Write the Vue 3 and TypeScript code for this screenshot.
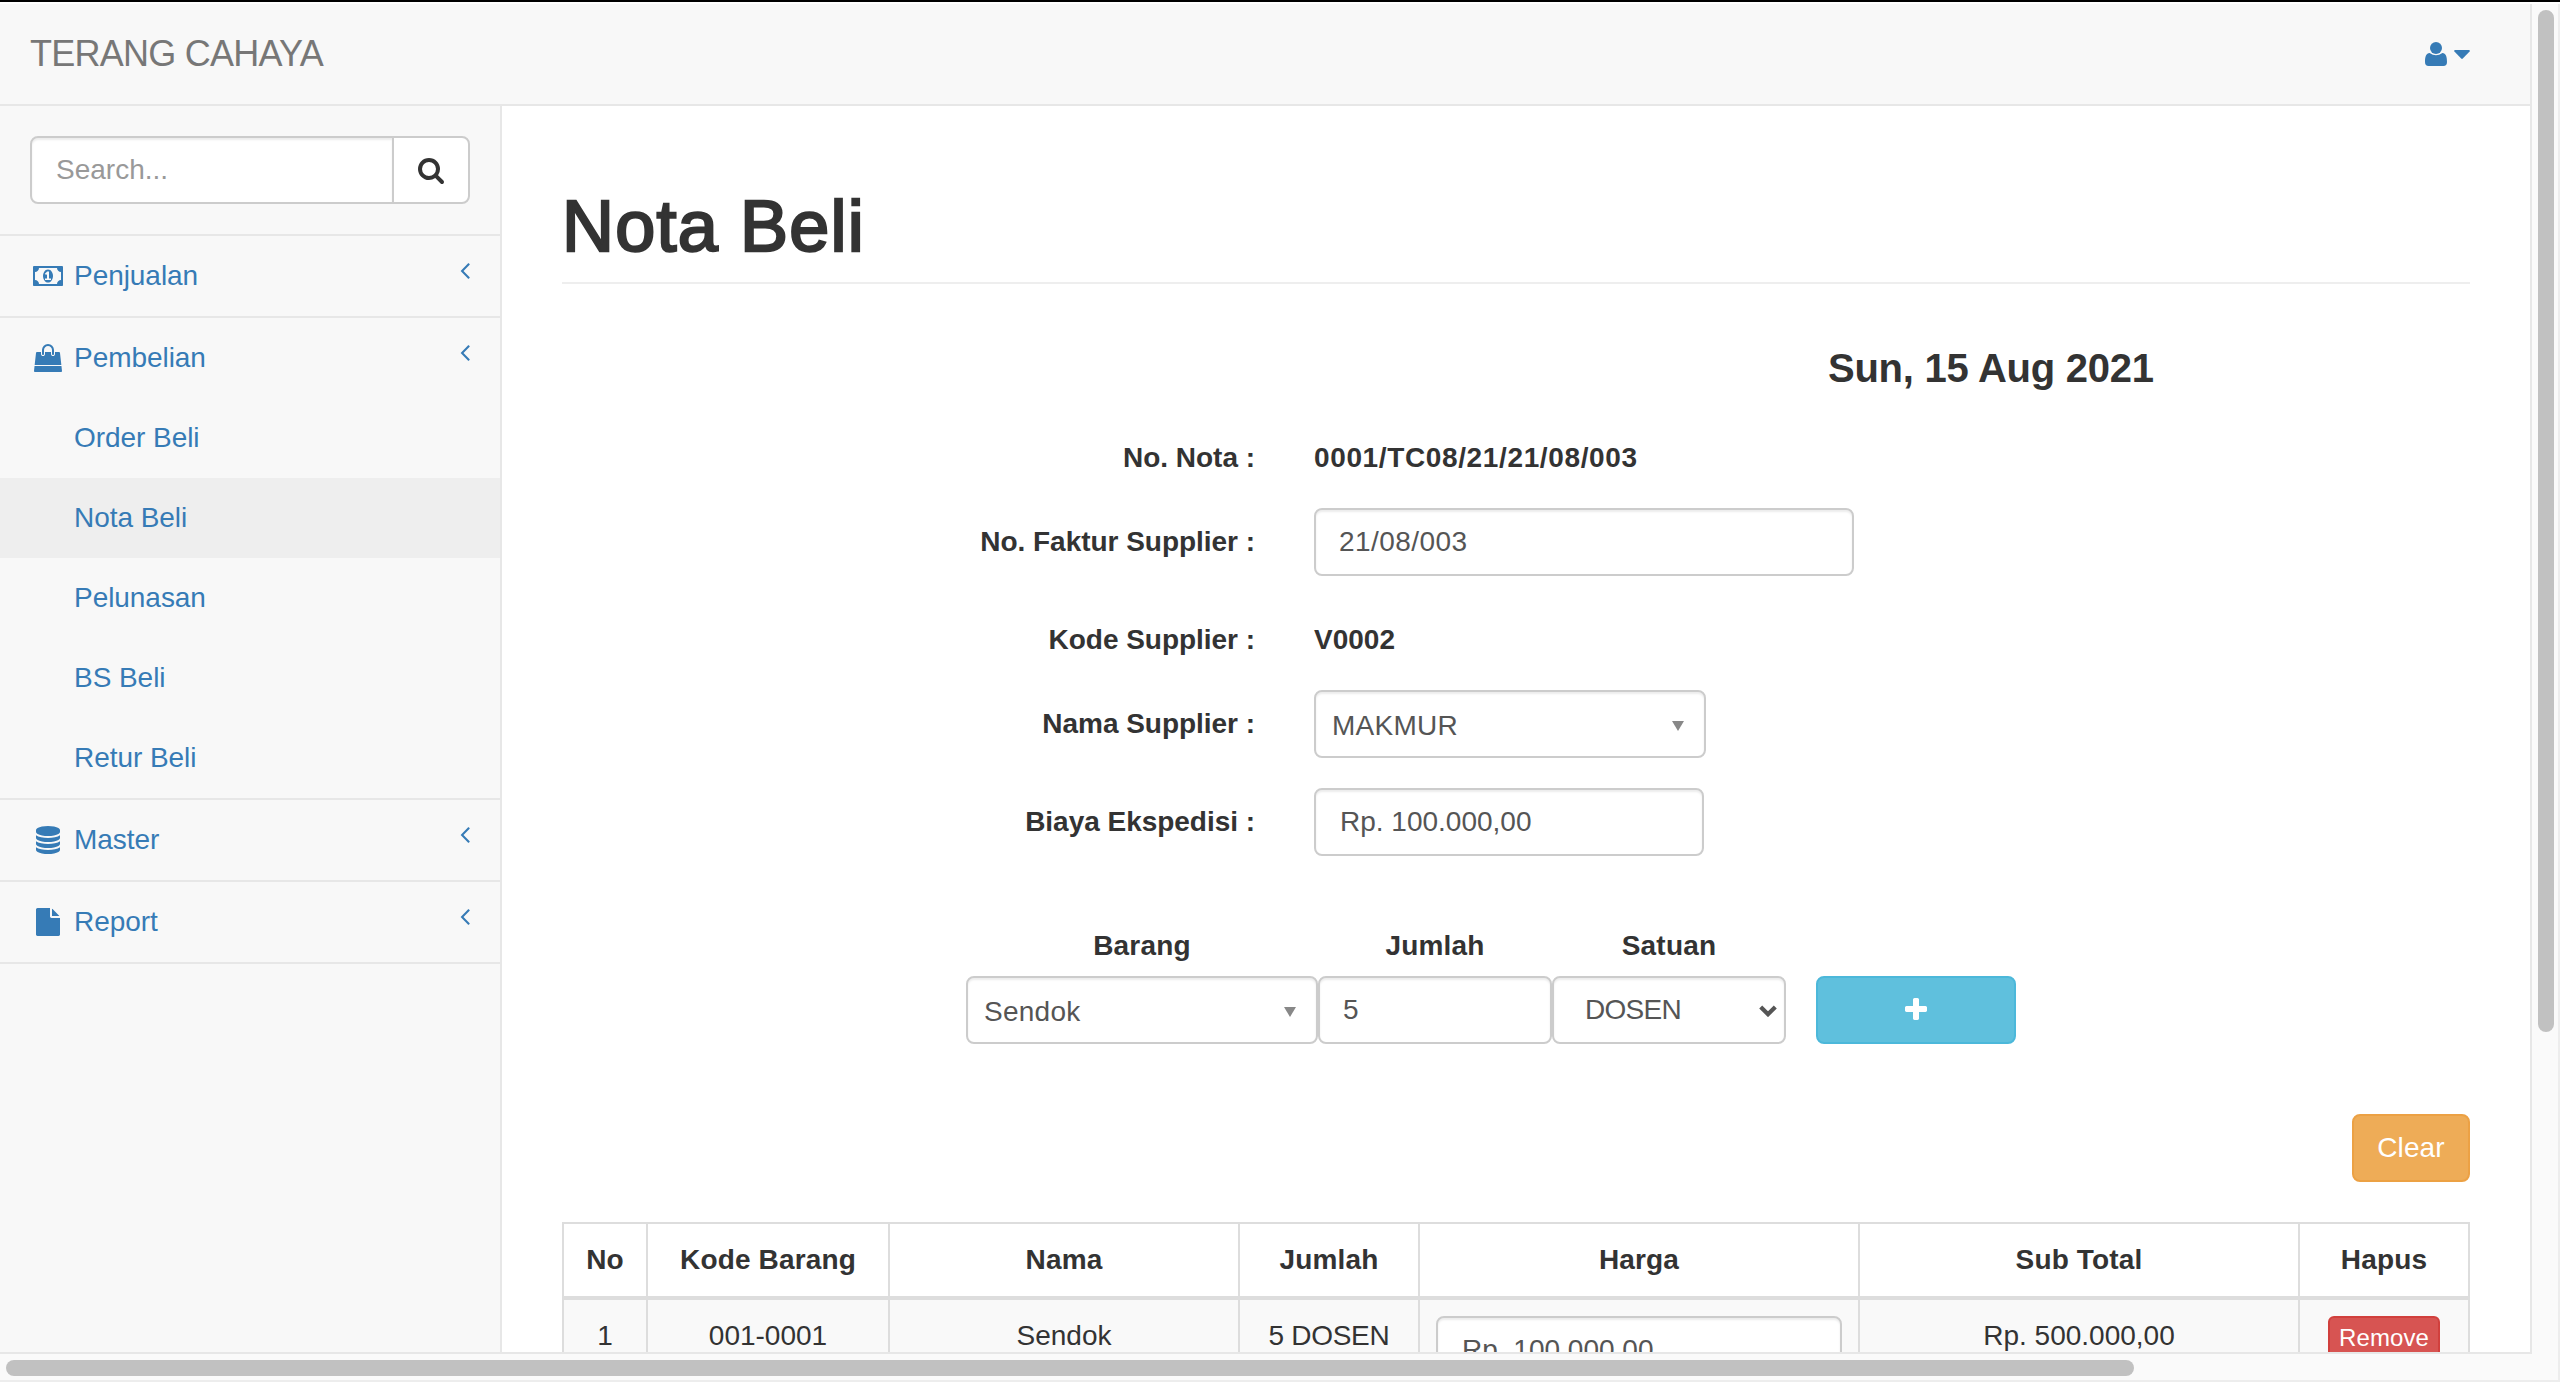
<script setup lang="ts">
import { ref } from 'vue'

interface MenuItem {
  label: string
  icon: string
  box: string
  wide?: boolean
  children?: string[]
}

const search = ref('')
const active = ref('Nota Beli')
const faktur = ref('21/08/003')
const biaya = ref('Rp. 100.000,00')
const jumlah = ref('5')
const harga = ref('Rp. 100.000,00')

const square = '0 0 1792 1792'
const angleLeft =
  'M1203 544q0 13-10 23l-393 393 393 393q10 10 10 23t-10 23l-50 50q-10 10-23 10t-23-10l-466-466q-10-10-10-23t10-23l466-466q10-10 23-10t23 10l50 50q10 10 10 23z'

const menu: MenuItem[] = [
  {
    label: 'Penjualan',
    box: '0 0 1920 1792',
    wide: true,
    icon: 'M768 1152h384v-96h-128v-448h-114l-148 137 77 80q42-37 55-57h2v288h-128v96zm512-256q0 70-21 142t-59.5 134-101.5 101-138 39-138-39-101.5-101-59.5-134-21-142 21-142 59.5-134 101.5-101 138-39 138 39 101.5 101 59.5 134 21 142zm512 256v-512q-106 0-181-75t-75-181h-1152q0 106-75 181t-181 75v512q106 0 181 75t75 181h1152q0-106 75-181t181-75zm128-832v1152q0 26-19 45t-45 19h-1792q-26 0-45-19t-19-45v-1152q0-26 19-45t45-19h1792q26 0 45 19t19 45z',
  },
  {
    label: 'Pembelian',
    box: square,
    icon: 'M1757 1408l35 313q3 28-16 50-19 21-48 21h-1664q-29 0-48-21-19-22-16-50l35-313h1722zm-93-839l86 775h-1708l86-775q3-24 21-40.5t43-16.5h256v128q0 53 37.5 90.5t90.5 37.5 90.5-37.5 37.5-90.5v-128h384v128q0 53 37.5 90.5t90.5 37.5 90.5-37.5 37.5-90.5v-128h256q25 0 43 16.5t21 40.5zm-384-185v256q0 26-19 45t-45 19-45-19-19-45v-256q0-106-75-181t-181-75-181 75-75 181v256q0 26-19 45t-45 19-45-19-19-45v-256q0-159 112.5-271.5t271.5-112.5 271.5 112.5 112.5 271.5z',
    children: ['Order Beli', 'Nota Beli', 'Pelunasan', 'BS Beli', 'Retur Beli'],
  },
  {
    label: 'Master',
    box: square,
    icon: 'M896 768q237 0 443-43t325-127v170q0 69-103 128t-280 93.5-385 34.5-385-34.5-280-93.5-103-128v-170q119 84 325 127t443 43zm0 768q237 0 443-43t325-127v170q0 69-103 128t-280 93.5-385 34.5-385-34.5-280-93.5-103-128v-170q119 84 325 127t443 43zm0-384q237 0 443-43t325-127v170q0 69-103 128t-280 93.5-385 34.5-385-34.5-280-93.5-103-128v-170q119 84 325 127t443 43zm0-1152q208 0 385 34.5t280 93.5 103 128v128q0 69-103 128t-280 93.5-385 34.5-385-34.5-280-93.5-103-128v-128q0-69 103-128t280-93.5 385-34.5z',
  },
  {
    label: 'Report',
    box: square,
    icon: 'M1152 512v-472q22 14 36 28l408 408q14 14 28 36h-472zm-128 32q0 40 28 68t68 28h544v1056q0 40-28 68t-68 28h-1344q-40 0-68-28t-28-68v-1600q0-40 28-68t68-28h800v544z',
  },
]

const columns = ['No', 'Kode Barang', 'Nama', 'Jumlah', 'Harga', 'Sub Total', 'Hapus']
</script>

<template>
  <div class="screen">
    <div class="viewport">
      <header class="navbar">
        <span class="brand">TERANG CAHAYA</span>
        <a class="user">
          <svg class="user-icon" viewBox="0 0 22 24">
            <circle cx="11" cy="6" r="6" />
            <path d="M4.6 11Q11 15.4 17.4 11C20.8 11 22 14.6 22 20Q22 24 18.4 24H3.6Q0 24 0 20C0 14.6 1.2 11 4.6 11Z" />
          </svg>
          <svg class="caret" viewBox="0 0 16 9"><path d="M0.8 0H15.2Q16.3 0.6 15.6 1.4L8.8 8.6Q8 9.3 7.2 8.6L0.4 1.4Q-0.3 0.6 0.8 0Z" /></svg>
        </a>
      </header>

      <div class="body">
        <aside class="sidebar">
          <div class="search">
            <input v-model="search" class="control search-input" placeholder="Search..." />
            <button class="search-btn">
              <svg class="fa" :viewBox="square">
                <path d="M1216 832q0-185-131.5-316.5t-316.5-131.5-316.5 131.5-131.5 316.5 131.5 316.5 316.5 131.5 316.5-131.5 131.5-316.5zm512 832q0 52-38 90t-90 38q-54 0-90-38l-343-342q-179 124-399 124-143 0-273.5-55.5t-225-150-150-225-55.5-273.5 55.5-273.5 150-225 225-150 273.5-55.5 273.5 55.5 225 150 150 225 55.5 273.5q0 220-124 399l343 343q37 37 37 90z" />
              </svg>
            </button>
          </div>
          <div v-for="item in menu" :key="item.label" class="group">
            <a class="link">
              <span class="icon-slot">
                <svg class="fa" :class="{ wide: item.wide }" :viewBox="item.box"><path :d="item.icon" /></svg>
              </span>
              <span class="link-text">{{ item.label }}</span>
              <svg class="fa arrow" :viewBox="square"><path :d="angleLeft" /></svg>
            </a>
            <a
              v-for="child in item.children ?? []"
              :key="child"
              class="link child"
              :class="{ active: child === active }"
              @click="active = child"
            >{{ child }}</a>
          </div>
        </aside>

        <main class="page">
          <h1 class="title">Nota Beli</h1>
          <div class="date">Sun, 15 Aug 2021</div>

          <div class="form">
            <div class="row">
              <label>No. Nota :</label>
              <b class="nota">0001/TC08/21/21/08/003</b>
            </div>
            <div class="row tall">
              <label>No. Faktur Supplier :</label>
              <input v-model="faktur" class="control faktur" />
            </div>
            <div class="row kode">
              <label>Kode Supplier :</label>
              <b>V0002</b>
            </div>
            <div class="row tall">
              <label>Nama Supplier :</label>
              <div class="control chosen supplier">
                <span class="caps">MAKMUR</span>
                <svg class="tri" viewBox="0 0 12 10"><path d="M0 0H12L6 10Z" /></svg>
              </div>
            </div>
            <div class="row tall">
              <label>Biaya Ekspedisi :</label>
              <input v-model="biaya" class="control biaya" />
            </div>
          </div>

          <div class="entry">
            <div class="field barang">
              <label>Barang</label>
              <div class="control chosen">
                <span>Sendok</span>
                <svg class="tri" viewBox="0 0 12 10"><path d="M0 0H12L6 10Z" /></svg>
              </div>
            </div>
            <div class="field jumlah">
              <label>Jumlah</label>
              <input v-model="jumlah" class="control" />
            </div>
            <div class="field satuan">
              <label>Satuan</label>
              <div class="control native">
                <span>DOSEN</span>
                <svg class="chev" viewBox="0 0 18 12"><path d="M1.7 1.9L9 9.2L16.3 1.9" /></svg>
              </div>
            </div>
            <button class="btn add">
              <svg class="fa" :viewBox="square">
                <path d="M1600 736v192q0 40-28 68t-68 28h-416v416q0 40-28 68t-68 28h-192q-40 0-68-28t-28-68v-416h-416q-40 0-68-28t-28-68v-192q0-40 28-68t68-28h416v-416q0-40 28-68t68-28h192q40 0 68 28t28 68v416h416q40 0 68 28t28 68z" />
              </svg>
            </button>
          </div>

          <div class="actions"><button class="btn clear">Clear</button></div>

          <div class="table">
            <div class="tr head">
              <div v-for="name in columns" :key="name" class="td">{{ name }}</div>
            </div>
            <div class="tr item">
              <div class="td">1</div>
              <div class="td">001-0001</div>
              <div class="td">Sendok</div>
              <div class="td unit">5 DOSEN</div>
              <div class="td"><input v-model="harga" class="control harga" /></div>
              <div class="td">Rp. 500.000,00</div>
              <div class="td"><button class="btn remove">Remove</button></div>
            </div>
          </div>
        </main>
      </div>
    </div>
    <div class="vbar"><div class="vthumb"></div></div>
    <div class="hbar"><div class="hthumb"></div></div>
    <div class="corner"></div>
  </div>
</template>

<style>
body {
  margin: 0;
  overflow: hidden;
}
</style>

<style scoped>
.screen,
.screen * {
  box-sizing: border-box;
}
.screen {
  width: 2560px;
  height: 1382px;
  padding-top: 2px;
  border-top: 2px solid #000;
  background: #fff;
  display: grid;
  grid-template-columns: 2532px 28px;
  grid-template-rows: 1350px 28px;
  font-family: 'Liberation Sans', Arial, sans-serif;
  font-size: 28px;
  line-height: 40px;
  letter-spacing: 0;
  color: #333;
  overflow: hidden;
}
.viewport {
  display: flex;
  flex-direction: column;
  overflow: hidden;
  border-right: 2px solid #e7e7e7;
  border-bottom: 2px solid #e7e7e7;
}
.navbar {
  flex: 0 0 102px;
  display: flex;
  justify-content: space-between;
  padding: 30px 60px 0 30px;
  background: #f8f8f8;
  border-bottom: 2px solid #e7e7e7;
}
.brand {
  font-size: 36px;
  letter-spacing: -0.75px;
  color: #777;
}
.user {
  display: flex;
  align-items: flex-start;
  gap: 7px;
  padding-top: 8px;
  color: #367bb6;
}
svg {
  display: block;
  fill: currentColor;
}
.user-icon {
  width: 22px;
  height: 24px;
}
.caret {
  width: 16px;
  height: 9px;
  margin-top: 8px;
}
.fa {
  flex: none;
  width: 28px;
  height: 28px;
}
.fa.wide {
  width: 30px;
}
.body {
  flex: 1;
  min-height: 0;
  display: flex;
}
.sidebar {
  flex: 0 0 502px;
  background: #f8f8f8;
  border-right: 2px solid #e7e7e7;
}
.search {
  display: flex;
  padding: 30px;
  border-bottom: 2px solid #e7e7e7;
}
.control {
  display: block;
  width: 100%;
  height: 68px;
  margin: 0;
  padding: 12px 24px;
  border: 2px solid #ccc;
  border-radius: 8px;
  background: #fff;
  box-shadow: inset 0 2px 2px rgba(0, 0, 0, 0.075);
  font: inherit;
  letter-spacing: 0;
  color: #555;
  outline: none;
}
.control::placeholder {
  color: #999;
  opacity: 1;
}
.search-input {
  flex: 1;
  min-width: 0;
  border-radius: 8px 0 0 8px;
}
.search-btn {
  flex: 0 0 78px;
  display: flex;
  align-items: center;
  justify-content: center;
  height: 68px;
  margin-left: -2px;
  padding: 0;
  border: 2px solid #ccc;
  border-radius: 0 8px 8px 0;
  background: #fff;
  color: #333;
}
.group {
  border-bottom: 2px solid #e7e7e7;
}
.link {
  display: flex;
  height: 80px;
  padding: 20px 30px;
  color: #367bb6;
  letter-spacing: -0.05px;
}
.icon-slot {
  width: 36px;
  margin-right: 8px;
  padding-top: 6px;
  display: flex;
  justify-content: center;
}
.link-text {
  flex: 1;
}
.arrow {
  margin-right: -9px;
}
.child {
  padding-left: 74px;
}
.child.active {
  background: #eee;
}
.page {
  flex: 1;
  padding: 80px 60px 0;
  background: #fff;
}
.title {
  height: 98px;
  margin: 0;
  border-bottom: 2px solid #eee;
  font-size: 72px;
  font-weight: 400;
  line-height: 80px;
  letter-spacing: 1.2px;
  -webkit-text-stroke: 2.4px #333;
}
.date {
  margin: 62px 0 0 1266px;
  font-size: 40px;
  font-weight: 700;
  line-height: 44px;
  letter-spacing: -0.25px;
}
.form {
  margin-top: 48px;
}
.row {
  display: grid;
  grid-template-columns: 693px 1fr;
  column-gap: 59px;
  align-items: center;
  font-weight: 700;
}
.row label {
  text-align: right;
  letter-spacing: -0.03px;
}
.tall {
  margin-top: 30px;
}
.kode {
  margin-top: 44px;
}
.nota {
  letter-spacing: 0.63px;
}
.row .control {
  font-weight: 400;
}
.row .faktur {
  width: 540px;
  padding-left: 23px;
  letter-spacing: 0.45px;
}
.supplier {
  width: 392px;
}
.biaya {
  width: 390px;
}
.chosen,
.native {
  display: flex;
  justify-content: space-between;
}
.chosen {
  padding: 14px 20px 10px 16px;
  letter-spacing: 0.25px;
}
.tri {
  width: 12px;
  height: 10px;
  margin-top: 15px;
  color: #888;
}
.entry {
  display: flex;
  align-items: flex-end;
  margin: 70px 0 0 404px;
}
.field label {
  display: block;
  margin-bottom: 10px;
  text-align: center;
  font-weight: 700;
  letter-spacing: 0.2px;
}
.barang {
  width: 352px;
}
.jumlah {
  width: 234px;
}
.jumlah .control {
  padding-left: 23px;
}
.satuan {
  width: 234px;
}
.native {
  padding: 12px 7px 12px 31px;
  letter-spacing: -0.7px;
}
.chev {
  width: 18px;
  height: 12px;
  margin-top: 15px;
  fill: none;
  stroke: #555;
  stroke-width: 4.2;
}
.btn {
  display: block;
  height: 68px;
  padding: 0;
  border: 2px solid;
  border-radius: 8px;
  font: inherit;
  letter-spacing: 0.1px;
  color: #fff;
}
.add {
  display: flex;
  align-items: center;
  justify-content: center;
  width: 200px;
  margin-left: 30px;
  background: #5fc0dd;
  border-color: #4cb8da;
}
.actions {
  display: flex;
  justify-content: flex-end;
  margin-top: 70px;
}
.clear {
  width: 118px;
  background: #eeac57;
  border-color: #eca144;
}
.table {
  margin-top: 40px;
  border-top: 2px solid #ddd;
  border-right: 2px solid #ddd;
}
.tr {
  display: grid;
  grid-template-columns: 84px 242px 350px 180px 440px 440px 170px;
}
.td {
  padding: 16px;
  border-left: 2px solid #ddd;
  text-align: center;
}
.head {
  border-bottom: 4px solid #ddd;
  font-weight: 700;
  letter-spacing: 0.15px;
}
.item {
  background: #f9f9f9;
}
.unit {
  letter-spacing: -0.3px;
}
.remove {
  width: 112px;
  height: 44px;
  margin: 0 auto;
  border-radius: 6px;
  background: #d75452;
  border-color: #d1403d;
  font-size: 24px;
  line-height: 36px;
}
.vbar,
.hbar,
.corner {
  background: #fafafa;
}
.vbar {
  padding: 6px 0 0 6px;
  border-right: 2px solid #ededed;
}
.vthumb {
  width: 16px;
  height: 1022px;
  border-radius: 8px;
  background: #c1c1c1;
}
.hbar {
  padding: 6px 0 0 6px;
  border-bottom: 2px solid #ededed;
}
.hthumb {
  width: 2128px;
  height: 16px;
  border-radius: 8px;
  background: #c1c1c1;
}
.corner {
  border-right: 2px solid #ededed;
  border-bottom: 2px solid #ededed;
}
</style>
